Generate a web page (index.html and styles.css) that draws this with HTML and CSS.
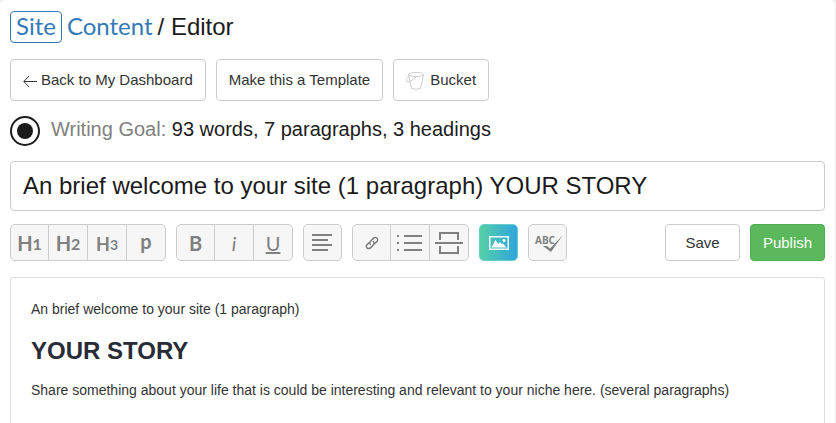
FILE: index.html
```
<!DOCTYPE html>
<html lang="en">
<head>
  <meta charset="UTF-8">
  <meta name="viewport" content="width=device-width, initial-scale=1.0">
  <title>Site Content / Editor</title>
  <link rel="stylesheet" href="styles.css">
</head>
<body>
  <div class="panel">
    <!-- Title -->
    <h1 class="page-title">
      <a href="#" class="brand"><span class="brand-box">Site</span>Content</a>
      <span>/ Editor</span>
    </h1>

    <!-- Page actions -->
    <div class="actions">
      <button type="button" class="btn">
        <svg class="icon-arrow" width="14" height="14" viewBox="0 0 14 14">
          <path d="M14 7.500H1M6 2L.8 7.500L6 13"/>
        </svg>
        Back to My Dashboard
      </button>
      <button type="button" class="btn">Make this a Template</button>
      <button type="button" class="btn btn-bucket">
        <svg class="icon-bucket" width="20" height="20" viewBox="0 0 20 20">
          <ellipse cx="10" cy="3.500" rx="7.500" ry="2"/>
          <path d="M2.500 4L5.500 17.500Q10 19 14.500 17.500L17.500 4"/>
          <path d="M3 5C0 7 -.2 10.500 1.300 11C3 11.500 7 9 10 6"/>
        </svg>
        Bucket
      </button>
    </div>

    <!-- Writing goal -->
    <div class="goal">
      <svg width="30" height="30" viewBox="0 0 30 30">
        <circle cx="15" cy="15" r="14" fill="none" stroke="#1b1b1b" stroke-width="2"/>
        <circle cx="15" cy="15" r="8" fill="#1b1b1b"/>
      </svg>
      <p><span class="goal-label">Writing Goal:</span> 93 words, 7 paragraphs, 3 headings</p>
    </div>

    <input type="text" class="title-input" aria-label="Title" value="An brief welcome to your site (1 paragraph) YOUR STORY">

    <!-- Toolbar -->
    <div class="toolbar">
      <div class="group">
        <button type="button" class="tool">H<small>1</small></button>
        <button type="button" class="tool">H<small>2</small></button>
        <button type="button" class="tool tool-h3">H<small>3</small></button>
        <button type="button" class="tool tool-p">p</button>
      </div>
      <div class="group">
        <button type="button" class="tool">B</button>
        <button type="button" class="tool tool-italic">i</button>
        <button type="button" class="tool tool-underline">U</button>
      </div>
      <div class="group">
        <button type="button" class="tool" aria-label="Align left">
          <svg width="22" height="20" viewBox="0 0 22 20">
            <path d="M0 2h20M0 7h16M0 12h20M0 17h16" stroke="#808080" stroke-width="2"/>
          </svg>
        </button>
      </div>
      <div class="group">
        <button type="button" class="tool" aria-label="Link">
          <svg width="14" height="14" viewBox="0 0 14 14" fill="none" stroke="#808080" stroke-width="1.500" stroke-linecap="round">
            <path d="M5.300 8.300C4.300 7 4.700 6 5.700 5L8.300 2.400C9.600 1.100 11.200 1.100 12 2.100C12.900 3.200 12.800 4.500 11.700 5.600L9.900 7.400"/>
            <path d="M8.300 5.500C9.500 6.800 9.300 8 8.200 9.100L5.700 11.600C4.400 12.900 2.900 12.900 2 11.900C1.100 10.900 1.100 9.500 2.300 8.400L4 6.700"/>
          </svg>
        </button>
        <button type="button" class="tool" aria-label="List">
          <svg width="26" height="18" viewBox="0 0 26 18">
            <path d="M0 2h2M0 9h2M0 16h2M7 2h18M7 9h18M7 16h18" stroke="#808080" stroke-width="2"/>
          </svg>
        </button>
        <button type="button" class="tool" aria-label="Page break">
          <svg width="28" height="24" viewBox="0 0 28 24" fill="none" stroke="#808080" stroke-width="2">
            <path d="M5 9V2h18v7M0 12h28M5 15v7h18v-7"/>
          </svg>
        </button>
      </div>
      <div class="group group-image">
        <button type="button" class="tool" aria-label="Image">
          <svg width="20" height="14" viewBox="0 0 20 14">
            <rect x=".75" y=".75" width="18.500" height="12.500" fill="none" stroke="#fff" stroke-width="1.500"/>
            <path d="M2.500 11.500L6.500 4L9 8L11 6L12.500 8L14 7.500L17.500 11.500Z" fill="#fff"/>
            <circle cx="15" cy="4.500" r="1.500" fill="#fff"/>
          </svg>
        </button>
      </div>
      <div class="group">
        <button type="button" class="tool" aria-label="Spell check">
          <svg width="30" height="20" viewBox="0 0 30 20">
            <text x="2" y="11" class="abc">ABC</text>
            <path d="M10 13L14 13L17 15.500L29.500 2.500L18 19Z" fill="#808080"/>
          </svg>
        </button>
      </div>
      <div class="publish">
        <button type="button" class="btn btn-small">Save</button>
        <button type="button" class="btn btn-small btn-green">Publish</button>
      </div>
    </div>

    <!-- Document -->
    <div class="editor" contenteditable="true" spellcheck="false">
      <p>An brief welcome to your site (1 paragraph)</p>
      <h2>YOUR STORY</h2>
      <p>Share something about your life that is could be interesting and relevant to your niche here. (several paragraphs)</p>
    </div>
  </div>
</body>
</html>
```
FILE: styles.css
```
* {
  box-sizing: border-box;
}

body {
  margin: 0;
  background-color: #eee;
  color: #1b1b1b;
  font-family: "Liberation Sans", Arial, sans-serif;
}

.panel {
  display: flex;
  flex-direction: column;
  min-height: 100vh;
  margin-right: 1px;
  padding: 11px 10px 0;
  background-color: #fff;
  border-radius: 5px 5px 0 0;
}

button,
input {
  font-family: inherit;
}

.page-title {
  display: flex;
  align-items: center;
  gap: 5px;
  height: 32px;
  margin: 0 0 16px;
  font-size: 24px;
  font-weight: normal;
}

.brand {
  display: flex;
  align-items: baseline;
  gap: 5px;
  color: #337ab7;
  font-family: Lato, sans-serif;
  font-size: 24px;
  line-height: 28px;
  text-decoration: none;
}

.brand-box {
  padding: 0 5px 2px;
  border: 1px solid #337ab7;
  border-radius: 4px;
}

.actions {
  display: flex;
  gap: 10px;
  margin-bottom: 15px;
}

.btn {
  display: flex;
  align-items: center;
  justify-content: center;
  gap: 4px;
  height: 42px;
  padding: 0 12px 2px;
  border: 1px solid #ccc;
  border-radius: 4px;
  background-color: #fff;
  color: #333;
  font-size: 15px;
  cursor: pointer;
}

.btn:hover {
  background-color: #f5f5f5;
}

.icon-arrow {
  margin-top: 4px;
  fill: none;
  stroke: #333;
}

.icon-bucket {
  margin-top: 4px;
  fill: none;
  stroke: #ccc;
}

.goal {
  display: flex;
  align-items: center;
  gap: 11px;
  margin-bottom: 15px;
}

.goal p {
  margin: 0;
  padding-bottom: 4px;
  font-size: 20px;
}

.goal-label {
  color: #808080;
}

.title-input {
  width: 100%;
  height: 50px;
  margin-bottom: 13px;
  padding: 0 12px;
  border: 1px solid #ccc;
  border-radius: 4px;
  color: #1b1b1b;
  font-size: 24px;
}

.toolbar {
  display: flex;
  gap: 10px;
  margin-bottom: 16px;
}

.group {
  display: flex;
  height: 37px;
  border: 1px solid #ccc;
  border-radius: 5px;
  background-color: #f6f6f6;
  overflow: hidden;
}

.tool {
  display: flex;
  align-items: center;
  justify-content: center;
  width: 37px;
  padding: 0;
  border: none;
  background: none;
  color: #808080;
  font-family: Lato, sans-serif;
  font-size: 20px;
  font-weight: bold;
  cursor: pointer;
}

.tool + .tool {
  width: 39px;
  border-left: 1px solid #ccc;
}

.tool small {
  padding-top: 2px;
  font-size: 16px;
}

.tool-h3 {
  padding-top: 2px;
  font-size: 18px;
}

.tool-h3 small {
  font-size: 14px;
}

.tool-p {
  padding-bottom: 4px;
}

.tool-italic {
  font-style: italic;
  font-weight: normal;
}

.tool-underline {
  font-weight: normal;
  text-decoration: underline;
}

.group-image {
  border-color: #6cc;
  background: linear-gradient(to right, #54cfa8, #30a5dc);
}

.abc {
  fill: #808080;
  font-family: "Open Sans", sans-serif;
  font-size: 10px;
  font-weight: bold;
}

.publish {
  display: flex;
  gap: 10px;
  margin-left: auto;
}

.btn-small {
  width: 75px;
  height: 37px;
  padding: 0;
}

.btn-green {
  border-color: #4cae4c;
  background-color: #5cb85c;
  color: #fff;
}

.btn-green:hover {
  background-color: #449d44;
}

.editor {
  flex: 1;
  padding: 20px;
  border: 1px solid #ddd;
  border-bottom: none;
  border-radius: 4px 4px 0 0;
  color: #333;
  font-size: 14px;
  line-height: 22px;
}

.editor p {
  margin: 0;
}

.editor h2 {
  margin: 16px 0 13px;
  color: #282c37;
  font-size: 24px;
  line-height: 30px;
}
```
